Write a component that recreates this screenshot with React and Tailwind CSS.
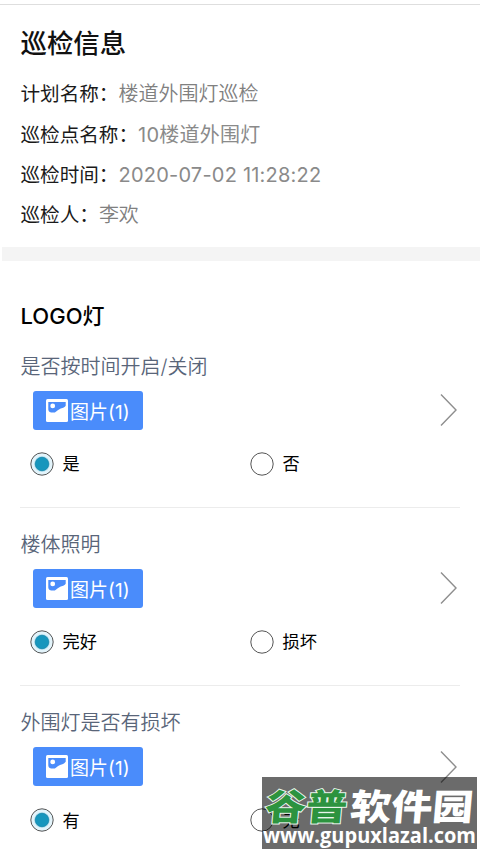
import React from 'react';

const info = [
    { label: '计划名称：', value: '楼道外围灯巡检' },
    { label: '巡检点名称：', value: '10楼道外围灯' },
    { label: '巡检时间：', value: '2020-07-02 11:28:22' },
    { label: '巡检人：', value: '李欢' },
];

const questions = [
    { title: '是否按时间开启/关闭', options: ['是', '否'] },
    { title: '楼体照明', options: ['完好', '损坏'] },
    { title: '外围灯是否有损坏', options: ['有', '无'] },
];

const PictureIcon = () => (
    <svg className="w-[22px] h-[23px] shrink-0" viewBox="0 0 22 23">
        <rect width="22" height="23" rx="1.5" fill="#fff" />
        <path d="M2.3 3H19.7V6.8C17.5 9.6 15.5 9 13 10.4C10.5 11.8 10 13.6 7 13.6C4.4 13.6 2.3 12.8 2.3 10.4Z" fill="#4a8cfb" />
        <circle cx="6.7" cy="6.9" r="2.4" fill="#fff" />
    </svg>
);

const Radio = ({ label, checked }) => (
    <div className="flex w-[220px] shrink-0 items-center">
        <svg className="w-6 h-6 shrink-0" viewBox="0 0 24 24">
            <circle cx="12" cy="12" r="11.2" fill={checked ? '#e3f4fb' : 'none'} stroke="#555" strokeWidth="1" />
            {checked && <circle cx="12" cy="12" r="7.8" fill="#a9d9e9" />}
            {checked && <circle cx="12" cy="12" r="6.7" fill="#1696bd" stroke="#1587ab" strokeWidth="0.8" />}
        </svg>
        <span className="ml-[9px] pt-px text-[17.2px] leading-6 text-black">{label}</span>
    </div>
);

const Question = ({ title, options }) => (
    <div className="mx-[20px] h-[178.3px] border-b border-[#ececec] pt-[22px]">
        <h3 className="h-[30px] pl-[0.5px] text-[20px] leading-[31px] font-[350] text-[#596579]">{title}</h3>
        <div className="mt-[9px] flex items-center justify-between pl-[12.5px] pr-[3px]">
            <button className="flex h-[39px] w-[110px] items-center rounded-[3px] bg-[#4a8cfb] pl-[13.5px] text-white">
                <PictureIcon />
                <span className="ml-[2px] pt-[5px] text-[19px] leading-6 whitespace-nowrap">图片(1)</span>
            </button>
            <svg className="w-[17px] h-[34px]" viewBox="0 0 17 34" fill="none" stroke="#8e8e8e" strokeWidth="1.4">
                <path d="M1 1.5L16 17L1 32.5" />
            </svg>
        </div>
        <div className="mt-[21.5px] flex pl-[9.5px]">
            <Radio label={options[0]} checked />
            <Radio label={options[1]} />
        </div>
    </div>
);

const Watermark = () => (
    <div className="absolute left-[262px] top-[777px] h-[72px] w-[215px] bg-black/58 text-white">
        <svg className="h-full w-full" viewBox="0 0 215 72">
            <g fontFamily="'Noto Sans CJK SC', sans-serif" fontWeight="900" fontSize="36" transform="skewX(-5)">
                <text x="6" y="43" textLength="82" lengthAdjust="spacingAndGlyphs" fill="#2c933f" stroke="#e9f5eb" strokeWidth="2" paintOrder="stroke">谷普</text>
                <text x="91" y="43" textLength="123" lengthAdjust="spacingAndGlyphs" fill="#fff">软件园</text>
            </g>
            <text x="1" y="66" textLength="213" lengthAdjust="spacingAndGlyphs" fontFamily="'Open Sans', sans-serif" fontWeight="700" fontSize="21" fill="#fff">www.gupuxlazal.com</text>
        </svg>
    </div>
);

const App = () => {
    return (
        <div className="relative h-[853px] w-[480px] overflow-hidden bg-white font-['Inter','Noto_Sans_CJK_SC',sans-serif]">
            <div className="h-[5px] border-b border-[#dedede]" />

            {/* Inspection info */}
            <section className="h-[242px] px-[20.5px] pt-[18px]">
                <h1 className="mb-[10px] text-[26.4px] font-medium leading-[41px] text-[#111]">巡检信息</h1>
                {info.map((item) => (
                    <div key={item.label} className="flex h-[40.4px] items-center whitespace-nowrap text-[20px] leading-[30px]">
                        <span className="text-[19.6px] text-[#1a1a1a]">{item.label}</span>
                        <span className={/\d/.test(item.value) ? 'tracking-[0.22px] text-[#8a8a8a]' : 'font-[350] text-[#808080]'}>{item.value}</span>
                    </div>
                ))}
            </section>
            <div className="ml-[2px] h-[13.5px] bg-[#f4f4f4]" />

            {/* Check items */}
            <h2 className="mt-[39px] h-[30px] pl-[20.5px] text-[22px] font-medium leading-[32px] text-black">LOGO灯</h2>
            {questions.map((q) => (
                <Question key={q.title} title={q.title} options={q.options} />
            ))}

            <Watermark />
        </div>
    );
};

export default App;
